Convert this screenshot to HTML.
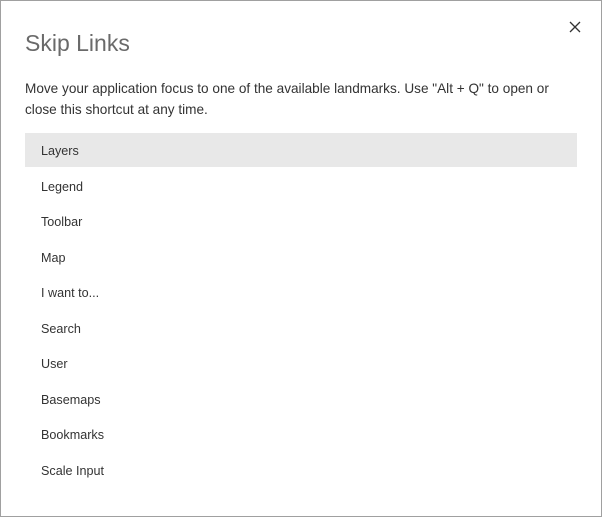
<!DOCTYPE html>
<html><head><style>
body{margin:0;width:602px;height:517px;overflow:hidden;background:#fff;font-family:"Liberation Sans",sans-serif;}
.box{position:absolute;left:0;top:0;width:600px;height:515px;border:1px solid #a0a0a0;}
h1{position:absolute;left:25px;top:30px;margin:0;font-size:23px;font-weight:normal;color:#6a6a6a;}
p{position:absolute;left:25px;top:78px;width:548px;margin:0;font-size:13.6px;line-height:21px;color:#333;}
.x{position:absolute;left:569px;top:21px;}
ul{position:absolute;left:25px;top:133px;width:552px;margin:0;padding:0;list-style:none;}
li{height:35.5px;line-height:37px;padding-left:16px;font-size:12.6px;color:#333;}
li.a{background:#e8e8e8;height:34px;line-height:37px;margin-bottom:1.5px;}
</style></head><body>
<div class="box"></div>
<h1>Skip Links</h1>
<svg class="x" width="12" height="12" viewBox="0 0 12 12"><path d="M1 1L11 11M11 1L1 11" stroke="#333" stroke-width="1.3"/></svg>
<p>Move your application focus to one of the available landmarks. Use "Alt + Q" to open or close this shortcut at any time.</p>
<ul>
<li class="a">Layers</li><li>Legend</li><li>Toolbar</li><li>Map</li><li>I want to...</li><li>Search</li><li>User</li><li>Basemaps</li><li>Bookmarks</li><li>Scale Input</li>
</ul>
</body></html>
